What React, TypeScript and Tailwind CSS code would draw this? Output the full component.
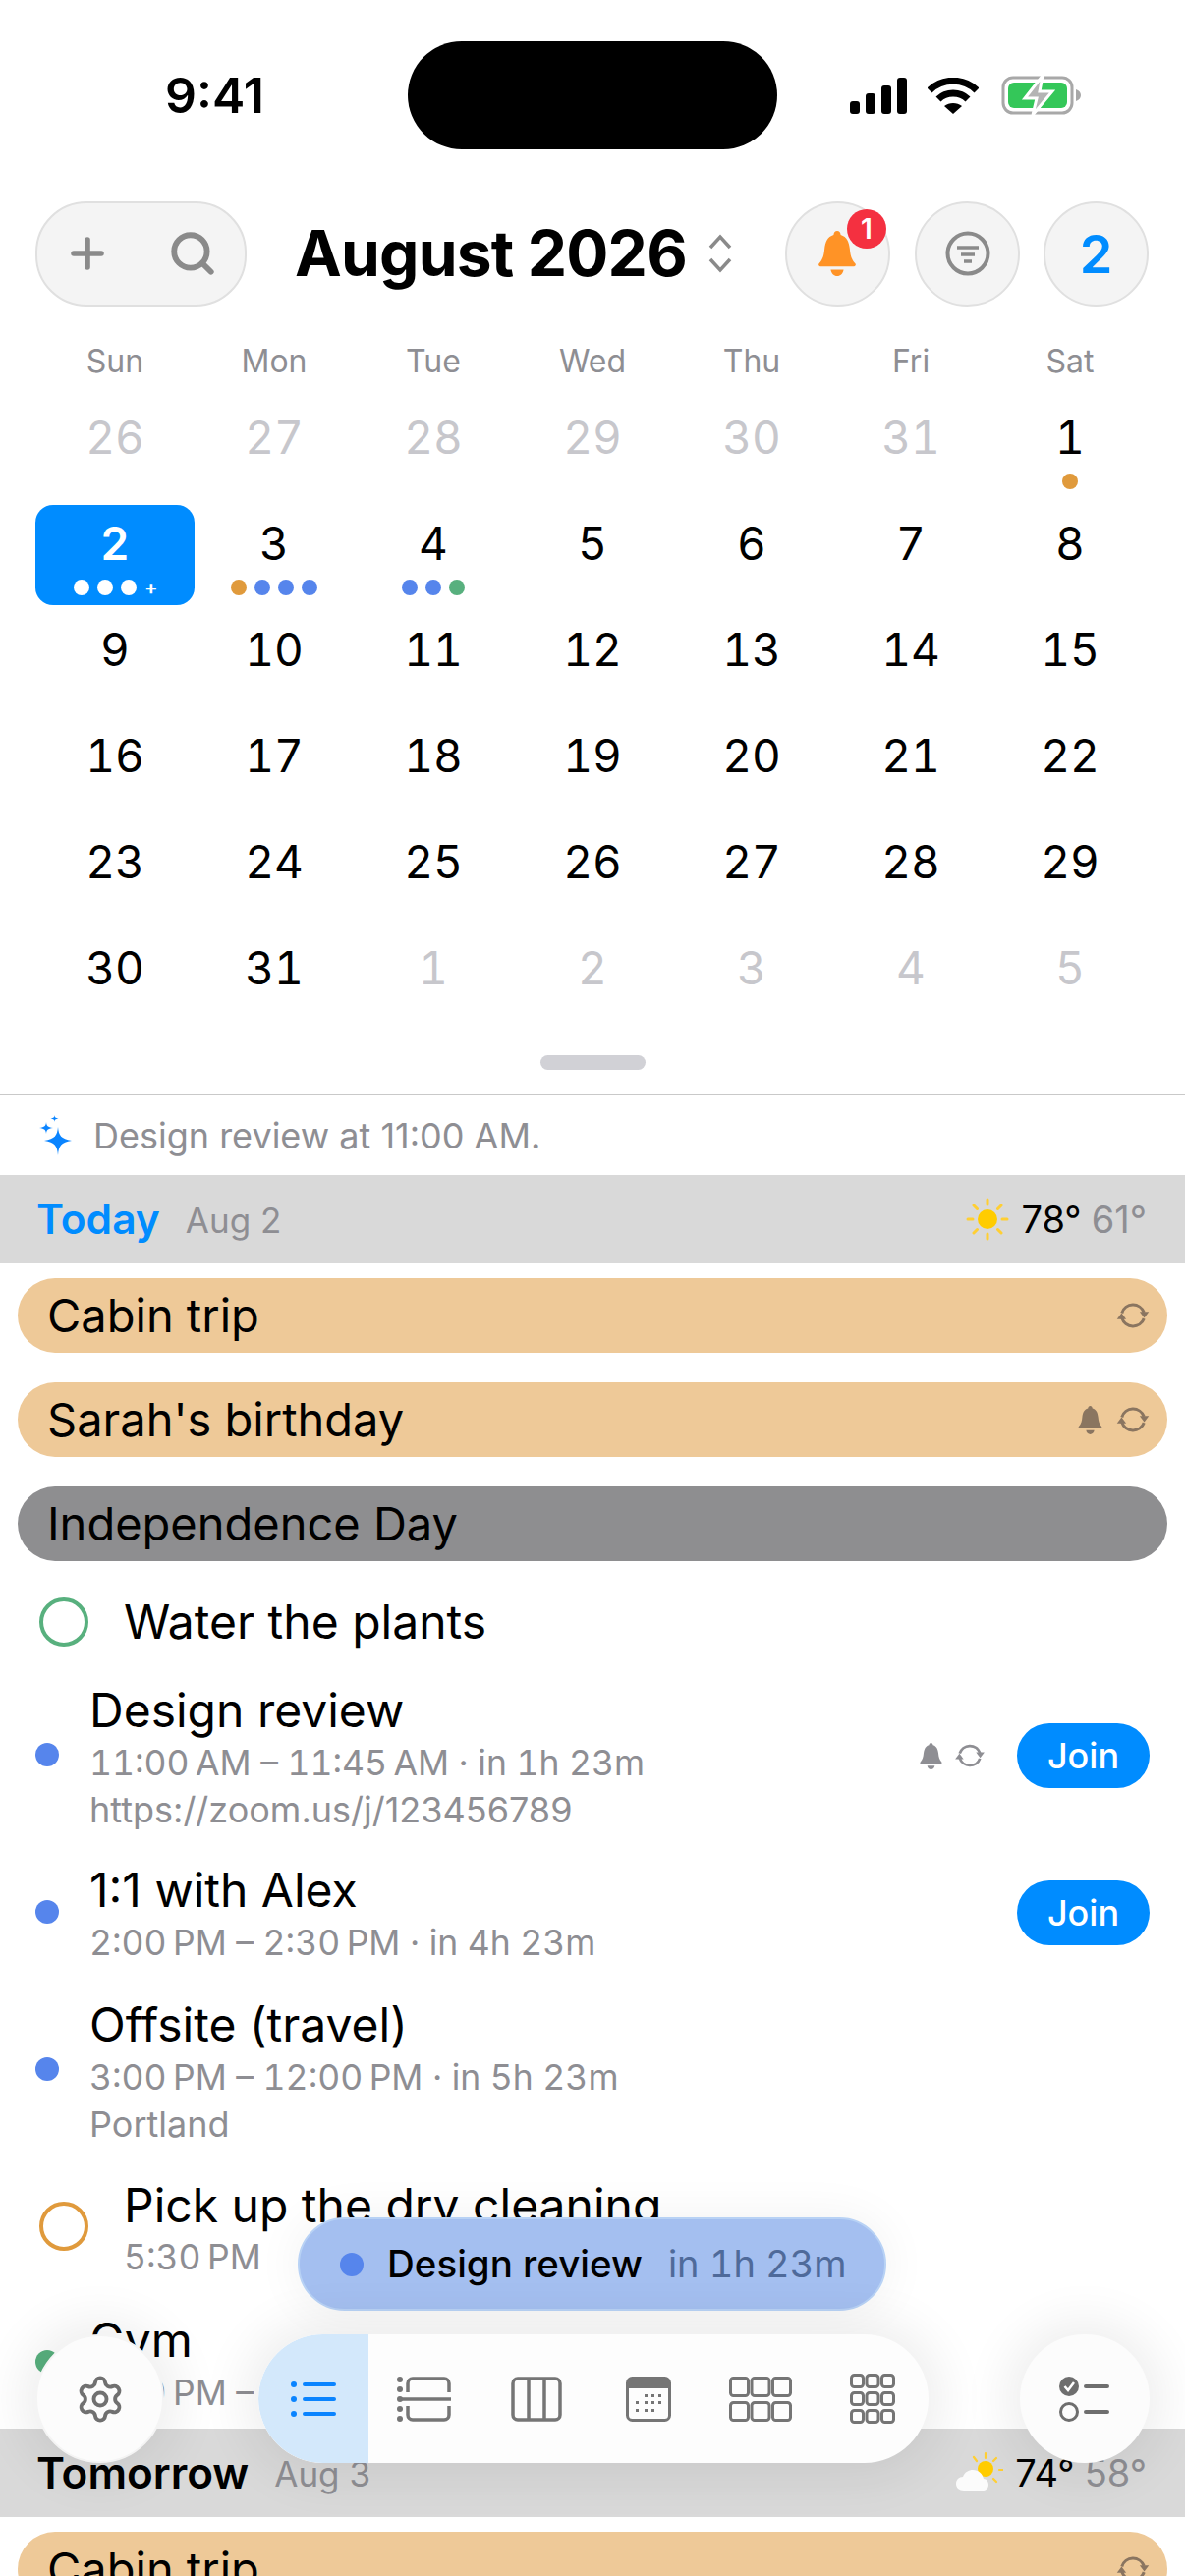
import { Plus, Search, Settings } from "lucide-react";

const MUTED = "#8e8e93";

const weeks = [
  [26, 27, 28, 29, 30, 31, 1],
  [2, 3, 4, 5, 6, 7, 8],
  [9, 10, 11, 12, 13, 14, 15],
  [16, 17, 18, 19, 20, 21, 22],
  [23, 24, 25, 26, 27, 28, 29],
  [30, 31, 1, 2, 3, 4, 5],
];

const dayDots: Record<string, string[]> = {
  "0-6": ["#e09a3c"],
  "1-1": ["#e09a3c", "#5685ec", "#5685ec", "#5685ec"],
  "1-2": ["#5685ec", "#5685ec", "#58b07e"],
};

function isOutside(row: number, col: number) {
  return (row === 0 && col < 6) || (row === 5 && col > 1);
}

function Bell({ color, className }: { color: string; className: string }) {
  return (
    <svg viewBox="0 0 24 28" className={className} fill={color}>
      <path d="M12 0c1.3 0 2 1 2.2 2.4C18 3.6 19.4 7 19.8 11c.4 4 1 6.700 3.400 9.300.6.700.2 1.700-.8 1.700H1.600c-1 0-1.400-1-.8-1.700C3.200 17.700 3.800 15 4.200 11c.4-4 1.800-7.400 5.600-8.600C10 1 10.700 0 12 0z" />
      <path d="M8 24h8c-.3 2.300-2 4-4 4s-3.700-1.700-4-4z" />
    </svg>
  );
}

function Repeat({ color, className }: { color: string; className: string }) {
  return (
    <svg viewBox="0 0 28 24" className={className} fill="none" stroke={color} strokeWidth="2.400">
      <path d="M5 10A9.500 9.500 0 0 1 23 9.500" />
      <path d="M23 14.500A9.500 9.500 0 0 1 5 14" />
      <path d="M19.500 9h7.500l-3.750 5z" fill={color} stroke="none" />
      <path d="M1 15h7.500L4.750 10z" fill={color} stroke="none" />
    </svg>
  );
}

function Sparkles() {
  return (
    <svg viewBox="0 0 34 41" className="w-[34px] h-[41px]" fill="#0a84ff">
      <path d="M19 12c.8 9 3 12 14 14-11 2-13.200 5-14 15-.8-10-3-13-14-15 11-2 13.200-5 14-14z" />
      <path d="M7 7c.4 4 1.500 5.300 7 6-5.500.7-6.600 2-7 6-.4-4-1.500-5.300-7-6 5.500-.7 6.600-2 7-6z" />
      <path d="M15.500 0c.2 2.200.8 3 4 3.500-3.200.5-3.800 1.300-4 3.500-.2-2.200-.8-3-4-3.500 3.200-.5 3.800-1.300 4-3.500z" />
    </svg>
  );
}

function Sun() {
  return (
    <svg viewBox="0 0 44 44" className="w-[44px] h-[44px]">
      <circle cx="22" cy="22" r="10" fill="#ffcc00" />
      <g stroke="#ffcf33" strokeWidth="3" strokeLinecap="round">
        <path d="M22 2v5M22 37v5M2 22h5M37 22h5M8 8l3.500 3.500M32.500 32.500L36 36M8 36l3.500-3.500M32.500 11.500L36 8" />
      </g>
    </svg>
  );
}

function CloudSun() {
  return (
    <svg viewBox="0 0 50 44" className="w-[50px] h-[44px]">
      <circle cx="32" cy="18" r="8" fill="#ffcc00" />
      <g stroke="#ffcf33" strokeWidth="2.200" strokeLinecap="round">
        <path d="M32 2v5M46 19h4M20 6l3 4M43 7l-3 3M43 31l-3-3" />
      </g>
      <path d="M10 40c-5 0-8-3-8-7 0-4 3-7 7-7 2-5 6-7 10-7 6 0 10 4 11 9 3 0 5 3 5 6 0 4-3 6-6 6z" fill="#fbfbfb" />
    </svg>
  );
}

function ListIcon() {
  return (
    <svg viewBox="0 0 46 36" className="w-[46px] h-[36px]" fill="#0a84ff">
      <circle cx="3" cy="3" r="3" />
      <circle cx="3" cy="18" r="3" />
      <circle cx="3" cy="33" r="3" />
      <rect x="12" y="1" width="34" height="4" rx="2" />
      <rect x="12" y="16" width="34" height="4" rx="2" />
      <rect x="12" y="31" width="34" height="4" rx="2" />
    </svg>
  );
}

function AgendaIcon() {
  return (
    <svg viewBox="0 0 56 46" className="w-[56px] h-[46px]" fill="none" stroke="#757575" strokeWidth="3.500">
      <path d="M11 16V7a5 5 0 0 1 5-5h32a5 5 0 0 1 5 5v9M11 30v9a5 5 0 0 0 5 5h32a5 5 0 0 0 5-5v-9" />
      <path d="M3 23h52" />
      <g fill="#757575" stroke="none">
        <circle cx="3" cy="3" r="3" />
        <circle cx="3" cy="13" r="3" />
        <circle cx="3" cy="23" r="3" />
        <circle cx="3" cy="33" r="3" />
        <circle cx="3" cy="43" r="3" />
      </g>
    </svg>
  );
}

function ColumnsIcon() {
  return (
    <svg viewBox="0 0 52 46" className="w-[52px] h-[46px]" fill="none" stroke="#757575" strokeWidth="3.500">
      <rect x="2" y="2" width="48" height="42" rx="5" />
      <path d="M18 2v42M34 2v42" />
    </svg>
  );
}

function MonthIcon() {
  return (
    <svg viewBox="0 0 46 46" className="w-[46px] h-[46px]">
      <rect x="1.500" y="1.500" width="43" height="43" rx="5" fill="none" stroke="#757575" strokeWidth="3" />
      <path d="M6 1h34a5 5 0 0 1 5 5v6H1V6a5 5 0 0 1 5-5z" fill="#757575" />
      <g fill="#757575">
        <rect x="19" y="18" width="3" height="3" />
        <rect x="26" y="18" width="3" height="3" />
        <rect x="33" y="18" width="3" height="3" />
        <rect x="10" y="25" width="3" height="3" />
        <rect x="19" y="25" width="3" height="3" />
        <rect x="26" y="25" width="3" height="3" />
        <rect x="33" y="25" width="3" height="3" />
        <rect x="10" y="33" width="3" height="3" />
        <rect x="19" y="33" width="3" height="3" />
        <rect x="26" y="33" width="3" height="3" />
      </g>
    </svg>
  );
}

function GridIcon({ rows }: { rows: number }) {
  const cell = rows === 2 ? 18 : 12;
  const w = rows === 2 ? 64 : 46;
  const rgap = rows === 2 ? 7 : 6;
  const gapX = (w - 3 - cell * 3) / 2;
  const cells = [];
  for (let r = 0; r < rows; r++) {
    for (let c = 0; c < 3; c++) {
      cells.push(
        <rect
          key={`${r}-${c}`}
          x={1.5 + c * (cell + gapX)}
          y={1.5 + r * (cell + rgap)}
          width={cell}
          height={cell}
          rx="3"
        />
      );
    }
  }
  const h = cell * rows + rgap * (rows - 1) + 3;
  return (
    <svg width={w} height={h} viewBox={`0 0 ${w} ${h}`} fill="none" stroke="#757575" strokeWidth="3">
      {cells}
    </svg>
  );
}

function TasksIcon() {
  return (
    <svg viewBox="0 0 52 46" className="w-[52px] h-[46px]">
      <circle cx="10" cy="10" r="10" fill="#6e6e6e" />
      <path d="M5.500 10l3.500 4 6-8" fill="none" stroke="#fff" strokeWidth="2.500" />
      <circle cx="10" cy="36" r="8.500" fill="none" stroke="#6e6e6e" strokeWidth="3" />
      <rect x="25" y="8" width="26" height="4" rx="2" fill="#6e6e6e" />
      <rect x="25" y="34" width="26" height="4" rx="2" fill="#6e6e6e" />
    </svg>
  );
}

function StatusIcons() {
  return (
    <div className="flex items-center">
      <svg viewBox="0 0 58 37" className="w-[58px] h-[37px]" fill="#000">
        <rect x="0" y="24" width="10" height="13" rx="3" />
        <rect x="16" y="16" width="10" height="21" rx="3" />
        <rect x="32" y="8" width="10" height="29" rx="3" />
        <rect x="48" y="0" width="10" height="37" rx="3" />
      </svg>
      <svg viewBox="0 0 52 37" className="w-[52px] h-[37px] ml-[21px]" fill="none" stroke="#000" strokeWidth="7">
        <path d="M2 13C15 0 37 0 50 13" />
        <path d="M11 22c8-8 22-8 30 0" />
        <path d="M26 37l-9-8c5-4 13-4 18 0z" fill="#000" stroke="none" />
      </svg>
      <svg viewBox="0 0 82 40" className="w-[82px] h-[40px] ml-[23px]">
        <rect x="2" y="2" width="70" height="36" rx="10" fill="none" stroke="#a8a8a8" strokeWidth="3" />
        <rect x="7" y="7" width="60" height="26" rx="6" fill="#34c759" />
        <path d="M76 14c3 1 5 3 5 6s-2 5-5 6z" fill="#a8a8a8" />
        <path d="M42 0L24 23h12l-4 17 20-24H39z" fill="#b4b4b4" stroke="#fff" strokeWidth="3" />
      </svg>
    </div>
  );
}

function CalendarGrid() {
  return (
    <div className="px-[36px]">
      <div className="grid grid-cols-7 h-[44px] items-center">
        {["Sun", "Mon", "Tue", "Wed", "Thu", "Fri", "Sat"].map((d) => (
          <div key={d} className="text-center text-[32px] leading-none text-[#8e8e93]">
            {d}
          </div>
        ))}
      </div>
      <div className="mt-[16px]">
        {weeks.map((week, r) => (
          <div key={r} className="grid grid-cols-7 h-[108px]">
            {week.map((day, c) => {
              const selected = r === 1 && c === 0;
              const dots = dayDots[`${r}-${c}`];
              return (
                <div
                  key={c}
                  className={
                    selected
                      ? "h-[102px] rounded-[18px] bg-[#008cff] flex flex-col items-center"
                      : "h-[102px] flex flex-col items-center"
                  }
                >
                  <div
                    className={
                      selected
                        ? "mt-[12px] h-[54px] text-[46px] leading-[54px] tabular-nums font-semibold text-white"
                        : isOutside(r, c)
                          ? "mt-[12px] h-[54px] text-[46px] leading-[54px] tabular-nums text-[#c7c7cc]"
                          : "mt-[12px] h-[54px] text-[46px] leading-[54px] tabular-nums text-black"
                    }
                  >
                    {day}
                  </div>
                  {selected && (
                    <div className="mt-[10px] flex items-center gap-[8px]">
                      <span className="w-[16px] h-[16px] rounded-full bg-white" />
                      <span className="w-[16px] h-[16px] rounded-full bg-white" />
                      <span className="w-[16px] h-[16px] rounded-full bg-white" />
                      <span className="w-[12px] text-[20px] leading-[16px] font-bold text-white">+</span>
                    </div>
                  )}
                  {dots && (
                    <div className="mt-[10px] flex items-center gap-[8px]">
                      {dots.map((color, i) => (
                        <span
                          key={i}
                          className="w-[16px] h-[16px] rounded-full"
                          style={{ backgroundColor: color }}
                        />
                      ))}
                    </div>
                  )}
                </div>
              );
            })}
          </div>
        ))}
      </div>
    </div>
  );
}

function DayHeader({
  label,
  date,
  hi,
  lo,
  today,
}: {
  label: string;
  date: string;
  hi: string;
  lo: string;
  today?: boolean;
}) {
  return (
    <div className="h-[90px] bg-[#d9d9d9] flex items-center px-[37px]">
      <span className={today ? "text-[42.5px] font-semibold text-[#008cff]" : "text-[44px] font-semibold text-black"}>
        {label}
      </span>
      <span className="ml-[26px] mt-[2px] text-[35px] text-[#8e8e93]">{date}</span>
      <div className="ml-auto mr-[2px] flex items-center">
        {today ? <Sun /> : <CloudSun />}
        <span className="ml-[12px] text-[38px] text-black">{hi}</span>
        <span className="ml-[10px] text-[38px] text-[#8e8e93]">{lo}</span>
      </div>
    </div>
  );
}

function AllDayPill({ title, gray, bell, repeat }: { title: string; gray?: boolean; bell?: boolean; repeat?: boolean }) {
  return (
    <div
      className={
        gray
          ? "h-[76px] rounded-full bg-[#8e8e90] flex items-center pl-[30px] pr-[17px]"
          : "h-[76px] rounded-full bg-[#eec998] flex items-center pl-[30px] pr-[17px]"
      }
    >
      <span className="text-[47px] text-black">{title}</span>
      <div className="ml-auto flex items-center gap-[13px]">
        {bell && <Bell color="#8a7560" className="w-[25px] h-[29px]" />}
        {repeat && <Repeat color="#8a7560" className="w-[36px] h-[30px]" />}
      </div>
    </div>
  );
}

function Event({
  title,
  time,
  extra,
  color,
  join,
  icons,
  className,
}: {
  title: string;
  time: string;
  extra?: string;
  color: string;
  join?: boolean;
  icons?: boolean;
  className: string;
}) {
  return (
    <div className={`flex items-center pl-[36px] pr-[36px] ${className}`}>
      <span className="w-[24px] h-[24px] mb-[6px] rounded-full shrink-0" style={{ backgroundColor: color }} />
      <div className="ml-[31px]">
        <div className="text-[48px] leading-[56px] text-black">{title}</div>
        <div className="mt-[2px] text-[35.500px] leading-[48px] tabular-nums text-[#8e8e93]">{time}</div>
        {extra && <div className="text-[36px] leading-[46px] text-[#8e8e93]">{extra}</div>}
      </div>
      <div className="ml-auto flex items-center mb-[4px]">
        {icons && (
          <div className="flex items-center gap-[11px] mr-[32px]">
            <Bell color="#8e8e93" className="w-[25px] h-[27px]" />
            <Repeat color="#8e8e93" className="w-[32px] h-[28px]" />
          </div>
        )}
        {join && (
          <span className="w-[135px] h-[66px] rounded-full bg-[#008cff] text-white text-[36px] font-medium flex items-center justify-center">
            Join
          </span>
        )}
      </div>
    </div>
  );
}

function Reminder({ title, time, color, className }: { title: string; time?: string; color: string; className: string }) {
  return (
    <div className={`flex items-center pl-[40px] ${className}`}>
      <span
        className={
          time
            ? "w-[50px] h-[50px] mb-[8px] rounded-full border-[4px] shrink-0"
            : "w-[50px] h-[50px] rounded-full border-[4px] shrink-0"
        }
        style={{ borderColor: color }}
      />
      <div className="ml-[36px]">
        <div className="text-[48px] leading-[56px] text-black">{title}</div>
        {time && <div className="text-[35.500px] leading-[50px] tabular-nums text-[#8e8e93]">{time}</div>}
      </div>
    </div>
  );
}

export default function App() {
  return (
    <div
      className="relative w-[1206px] h-[2622px] overflow-hidden bg-white"
      style={{ fontFamily: "Inter, 'Liberation Sans', sans-serif", color: MUTED }}
    >
      {/* status bar */}
      <div className="h-[204px] pt-[42px] flex items-start">
        <div className="w-[415px] h-[110px] flex items-center justify-center pl-[22px]">
          <span className="text-[50px] font-semibold text-black">9:41</span>
        </div>
        <div className="w-[376px] h-[110px] rounded-[55px] bg-black" />
        <div className="h-[110px] flex items-center pl-[74px]">
          <StatusIcons />
        </div>
      </div>

      {/* toolbar */}
      <div className="h-[108px] flex items-center pl-[36px] pr-[37px]">
        <div className="w-[215px] h-[107px] rounded-[52px] bg-[#f4f4f4] border-2 border-[#e0e0e0] flex items-center justify-between pl-[27px] pr-[28px]">
          <Plus size={48} color="#8a8a8a" strokeWidth={2.8} />
          <Search size={50} color="#8a8a8a" strokeWidth={2.8} />
        </div>
        <h1 className="ml-[49px] text-[64px] font-bold text-black tracking-[-0.8px]">August 2026</h1>
        <svg viewBox="0 0 26 40" className="ml-[21px] w-[26px] h-[40px]" fill="none" stroke="#8a8a8a" strokeWidth="3.500">
          <path d="M3 14L13 3l10 11M3 26l10 11 10-11" />
        </svg>
        <div className="relative ml-auto w-[107px] h-[107px] rounded-full bg-[#f4f4f4] border-2 border-[#e0e0e0] flex items-center justify-center">
          <Bell color="#ff9326" className="w-[42px] h-[46px] mr-[2px]" />
          <span className="absolute top-[6px] right-[2px] w-[40px] h-[40px] rounded-full bg-[#f43040] text-white text-[28px] font-semibold flex items-center justify-center">
            1
          </span>
        </div>
        <div className="ml-[25px] w-[107px] h-[107px] rounded-full bg-[#f4f4f4] border-2 border-[#e0e0e0] flex items-center justify-center">
          <svg viewBox="0 0 46 46" className="w-[46px] h-[46px]" fill="none" stroke="#8a8a8a">
            <circle cx="23" cy="23" r="20.500" strokeWidth="4" />
            <path d="M12 17h22M16 24h14M19 31h8" strokeWidth="3.500" />
          </svg>
        </div>
        <div className="ml-[24px] w-[107px] h-[107px] rounded-full bg-[#f4f4f4] border-2 border-[#e0e0e0] flex items-center justify-center">
          <span className="text-[54px] font-semibold text-[#008cff]">2</span>
        </div>
      </div>

      <div className="mt-[34px]">
        <CalendarGrid />
      </div>

      {/* drag handle */}
      <div className="h-[35px] flex items-end justify-center">
        <div className="w-[107px] h-[15px] rounded-full bg-[#d1d1d6]" />
      </div>
      <div className="mt-[25px] h-px bg-[#c9c9c9]" />

      <div className="h-[81px] flex items-center pl-[40px]">
        <Sparkles />
        <span className="ml-[21px] text-[36px] text-[#8e8e93]">Design review at 11:00 AM.</span>
      </div>

      <DayHeader label="Today" date="Aug 2" hi="78°" lo="61°" today />

      <div className="mt-[15px] px-[18px] flex flex-col gap-[30px]">
        <AllDayPill title="Cabin trip" repeat />
        <AllDayPill title="Sarah's birthday" bell repeat />
        <AllDayPill title="Independence Day" gray />
      </div>

      <Reminder title="Water the plants" color="#58b07e" className="mt-[15px] h-[94px]" />
      <Event
        title="Design review"
        time={"11:00\u2009AM – 11:45\u2009AM · in 1h 23m"}
        extra="https://zoom.us/j/123456789"
        color="#5685ec"
        join
        icons
        className="mt-[15px]"
      />
      <Event title="1:1 with Alex" time={"2:00\u2009PM – 2:30\u2009PM · in 4h 23m"} color="#5685ec" join className="mt-[31px]" />
      <Event
        title="Offsite (travel)"
        time={"3:00\u2009PM – 12:00\u2009PM · in 5h 23m"}
        extra="Portland"
        color="#5685ec"
        className="mt-[31px]"
      />
      <Reminder title="Pick up the dry cleaning" time={"5:30\u2009PM"} color="#e09a3c" className="mt-[32px]" />
      <Event title="Gym" time={"6:00\u2009PM – 7:00\u2009PM"} color="#58b07e" className="mt-[31px]" />

      <div className="mt-[12px]">
        <DayHeader label="Tomorrow" date="Aug 3" hi="74°" lo="58°" />
      </div>
      <div className="mt-[15px] px-[18px]">
        <AllDayPill title="Cabin trip" repeat />
      </div>

      {/* floating now pill */}
      <div className="absolute left-[303px] top-[2257px] w-[599px] h-[95px] rounded-full bg-[#a4bff0] border-2 border-[#b8d2f5] flex items-center pl-[41px] shadow-[0_0_50px_rgba(0,0,0,0.06)]">
        <span className="w-[24px] h-[24px] rounded-full bg-[#5685ec]" />
        <span className="ml-[24px] text-[38.500px] font-medium text-black">Design review</span>
        <span className="ml-[26px] text-[38px] tabular-nums text-[#4f6a9a]">in 1h 23m</span>
      </div>

      {/* floating bottom controls */}
      <div className="absolute left-[36px] top-[2376px] w-[1134px] flex">
        <div className="w-[131px] h-[131px] rounded-full bg-[#fcfcfc] border-2 border-[#f4f4f4] flex items-center justify-center shadow-[0_0_50px_14px_rgba(0,0,0,0.07)]">
          <Settings size={52} color="#707070" strokeWidth={1.8} />
        </div>
        <div className="ml-[96px] w-[682px] h-[131px] rounded-[66px] bg-[#fdfdfd] flex items-center overflow-hidden shadow-[0_0_50px_14px_rgba(0,0,0,0.07)]">
          <div className="w-[112px] h-full bg-[#d3e8fb] rounded-l-[66px] flex items-center justify-center">
            <ListIcon />
          </div>
          <div className="w-[114px] flex justify-center"><AgendaIcon /></div>
          <div className="w-[114px] flex justify-center"><ColumnsIcon /></div>
          <div className="w-[114px] flex justify-center"><MonthIcon /></div>
          <div className="w-[114px] flex justify-center"><GridIcon rows={2} /></div>
          <div className="w-[114px] flex justify-center"><GridIcon rows={3} /></div>
        </div>
        <div className="ml-[93px] w-[132px] h-[131px] rounded-full bg-[#fcfcfc] flex items-center justify-center shadow-[0_0_50px_14px_rgba(0,0,0,0.07)]">
          <TasksIcon />
        </div>
      </div>
    </div>
  );
}
